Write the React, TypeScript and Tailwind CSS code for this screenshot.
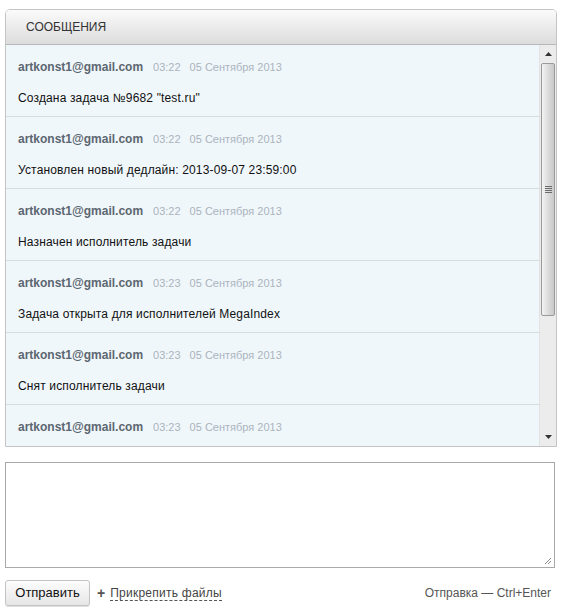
const MESSAGES = [
  { author: 'artkonst1@gmail.com', time: '03:22', date: '05 Сентября 2013', text: 'Создана задача №9682 "test.ru"' },
  { author: 'artkonst1@gmail.com', time: '03:22', date: '05 Сентября 2013', text: 'Установлен новый дедлайн: 2013-09-07 23:59:00' },
  { author: 'artkonst1@gmail.com', time: '03:22', date: '05 Сентября 2013', text: 'Назначен исполнитель задачи' },
  { author: 'artkonst1@gmail.com', time: '03:23', date: '05 Сентября 2013', text: 'Задача открыта для исполнителей MegaIndex' },
  { author: 'artkonst1@gmail.com', time: '03:23', date: '05 Сентября 2013', text: 'Снят исполнитель задачи' },
  { author: 'artkonst1@gmail.com', time: '03:23', date: '05 Сентября 2013', text: '' },
];

function Scrollbar() {
  return (
    <div className="w-[17px] shrink-0 flex flex-col bg-[#ececec] border-l border-[#e2e2e2]">
      <div className="h-[18px] flex items-center justify-center">
        <svg width="7" height="4" viewBox="0 0 7 4"><path d="M3.5 0 L7 4 L0 4 Z" fill="#333" /></svg>
      </div>
      <div className="h-[253px] mx-[1px] rounded-[2px] border border-[#9a9a9a] bg-gradient-to-r from-[#f4f4f4] via-[#dcdcdc] to-[#c9c9c9] flex items-center justify-center">
        <div className="flex flex-col gap-[1px]">
          <div className="w-[7px] h-[1px] bg-[#6b6b6b]" />
          <div className="w-[7px] h-[1px] bg-[#6b6b6b]" />
          <div className="w-[7px] h-[1px] bg-[#6b6b6b]" />
          <div className="w-[7px] h-[1px] bg-[#6b6b6b]" />
        </div>
      </div>
      <div className="flex-1" />
      <div className="h-[18px] flex items-center justify-center">
        <svg width="7" height="4" viewBox="0 0 7 4"><path d="M0 0 L7 0 L3.5 4 Z" fill="#333" /></svg>
      </div>
    </div>
  );
}

export default function App() {
  return (
    <div className="w-[561px] h-[612px] bg-white pt-[9px] pl-[5px] font-['Liberation_Sans',Arial,sans-serif]">
      <div className="w-[552px] border border-[#c4c4c4] rounded-t-[5px] overflow-hidden">
        <div className="h-[35px] flex items-center pl-[20px] bg-gradient-to-b from-[#fbfbfb] to-[#dcdcdc] border-b border-[#b8b8b8] text-[12px] text-[#333]">
          СООБЩЕНИЯ
        </div>
        <div className="h-[401px] flex bg-[#f0f7fb] overflow-hidden">
          <div className="flex-1 overflow-hidden">
            {MESSAGES.map((m, i) => (
              <div key={i} className="h-[72px] border-b border-[#d9dcde] pl-[12px] pt-[13px]">
                <div className="h-[16px] flex items-baseline">
                  <span className="text-[12px] font-bold text-[#5c6670]">{m.author}</span>
                  <span className="ml-[10px] text-[11px] text-[#aab3bb]">{m.time}</span>
                  <span className="ml-[9px] text-[11px] text-[#aab3bb]">{m.date}</span>
                </div>
                {m.text && <div className="mt-[15px] h-[16px] text-[12px] tracking-[0.15px] text-[#111]">{m.text}</div>}
              </div>
            ))}
          </div>
          <Scrollbar />
        </div>
      </div>

      <div className="relative mt-[15px] w-[550px] h-[106px] border border-[#a9a9a9] bg-white">
        <svg className="absolute right-[2px] bottom-[2px]" width="8" height="8" viewBox="0 0 8 8">
          <path d="M7 1 L1 7 M7 4 L4 7" stroke="#888" strokeWidth="1" />
        </svg>
      </div>

      <div className="mt-[12px] w-[546px] flex items-center">
        <button className="h-[26px] w-[85px] rounded-[3px] border border-[#c3c3c3] bg-gradient-to-b from-[#fdfdfd] to-[#e6e6e6] text-[13px] text-[#111] shadow-[0_1px_0_#e0e0e0]">
          Отправить
        </button>
        <span className="ml-[7px] text-[14px] font-bold text-[#555]">+</span>
        <span className="ml-[5px] text-[12px] tracking-[0.25px] text-[#444] border-b border-dashed border-[#555] leading-[14px]">Прикрепить файлы</span>
        <span className="ml-auto text-[12px] text-[#555]">Отправка — Ctrl+Enter</span>
      </div>
    </div>
  );
}
